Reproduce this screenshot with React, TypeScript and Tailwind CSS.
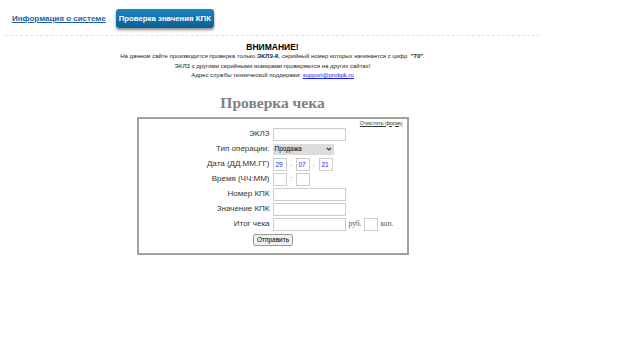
import React from 'react';

const font = { fontFamily: '"Liberation Sans", Arial, sans-serif' };
const serif = { fontFamily: '"Liberation Serif", "Times New Roman", serif' };

/**
 * Label + control row of the check form
 */
const Row: React.FC<{ label: string; children: React.ReactNode }> = ({ label, children }) => (
  <div className="flex items-center h-[15px]">
    <div className="w-[134px] pr-[3px] text-right text-[8px] text-[#333]">{label}</div>
    <div className="flex items-center">{children}</div>
  </div>
);

const Input: React.FC<{ w: string; value?: string }> = ({ w, value }) => (
  <div className={`${w} h-[13px] border border-[#ccc] bg-white text-[6.5px] text-[#1a1aff] pl-[2px] leading-[11px]`}>
    {value}
  </div>
);

export default function App() {
  return (
    <div className="w-[620px] h-[343px] bg-white overflow-hidden" style={font}>
      {/* Top navigation */}
      <div className="flex items-center h-[35px] pl-[12px] pt-[2px] gap-[10px]">
        <a className="text-[8px] font-bold text-[#1f5fa6] underline">Информация о системе</a>
        <div className="h-[19px] px-[3px] flex items-center rounded-[3px] bg-gradient-to-b from-[#1a86c0] to-[#0a5f93] text-white text-[7.8px] font-bold shadow-[0_2px_3px_rgba(0,0,0,0.45)]">
          Проверка значения КПК
        </div>
      </div>
      <div className="ml-[5px] w-[535px] border-t border-dashed border-[#e2e2e2]" />

      <div className="w-[545px] flex flex-col items-center">
        {/* Notice */}
        <div className="mt-[6px] text-[8.5px] font-bold text-black leading-[10px]">ВНИМАНИЕ!</div>
        <div className="text-[6px] text-[#222] leading-[9.5px] text-center">
          <div>
            На данном сайте производится проверка только <b>ЭКЛЗ-К</b>, серийный номер которых начинается с цифр <b>&nbsp;"70"</b>.
          </div>
          <div>ЭКЛЗ с другими серийными номерами проверяются на других сайтах!</div>
          <div>
            Адрес службы технической поддержки: <span className="text-[#1a1aff] underline">support@prokpk.ru</span>
          </div>
        </div>

        {/* Title */}
        <div className="mt-[12px] text-[15.5px] font-bold text-[#808080] leading-[20px]" style={serif}>
          Проверка чека
        </div>

        {/* Form box */}
        <div className="mt-[4px] w-[272px] h-[138px] border-2 border-[#a0a0a0] bg-white flex flex-col">
          <div className="flex justify-end pr-[4px] pt-[1px] h-[8px]">
            <span className="text-[5.5px] text-[#333] underline leading-[7px]">Очистить форму</span>
          </div>
          <div className="flex flex-col">
            <Row label="ЭКЛЗ">
              <Input w="w-[73px]" />
            </Row>
            <Row label="Тип операции:">
              <div className="w-[61px] h-[11px] bg-[#dcdcdc] rounded-[1px] flex items-center justify-between px-[2px] text-[6.5px] text-black">
                <span>Продажа</span>
                <svg width="6" height="4" viewBox="0 0 6 4">
                  <path d="M0.8 0.8 L3 3 L5.2 0.8" stroke="#333" strokeWidth="1.2" fill="none" />
                </svg>
              </div>
            </Row>
            <Row label="Дата (ДД.ММ.ГГ)">
              <Input w="w-[14px]" value="29" />
              <span className="w-[9px] text-center text-[7px] text-[#666]">.</span>
              <Input w="w-[14px]" value="07" />
              <span className="w-[9px] text-center text-[7px] text-[#666]">.</span>
              <Input w="w-[14px]" value="21" />
            </Row>
            <Row label="Время (ЧЧ:ММ)">
              <Input w="w-[14px]" />
              <span className="w-[9px] text-center text-[7px] text-[#666]">:</span>
              <Input w="w-[14px]" />
            </Row>
            <Row label="Номер КПК">
              <Input w="w-[73px]" />
            </Row>
            <Row label="Значение КПК">
              <Input w="w-[73px]" />
            </Row>
            <Row label="Итог чека">
              <Input w="w-[73px]" />
              <span className="ml-[3px] mr-[2px] text-[7.5px] text-[#555]" style={serif}>
                руб.
              </span>
              <Input w="w-[14px]" />
              <span className="ml-[3px] text-[7.5px] text-[#555]" style={serif}>
                коп.
              </span>
            </Row>
          </div>
          <div className="flex justify-center mt-[2px] pl-[1px]">
            <div className="h-[12px] px-[3px] border border-[#999] rounded-[2px] bg-[#f0f0f0] text-[6.5px] text-black flex items-center">
              Отправить
            </div>
          </div>
        </div>
      </div>
    </div>
  );
}
